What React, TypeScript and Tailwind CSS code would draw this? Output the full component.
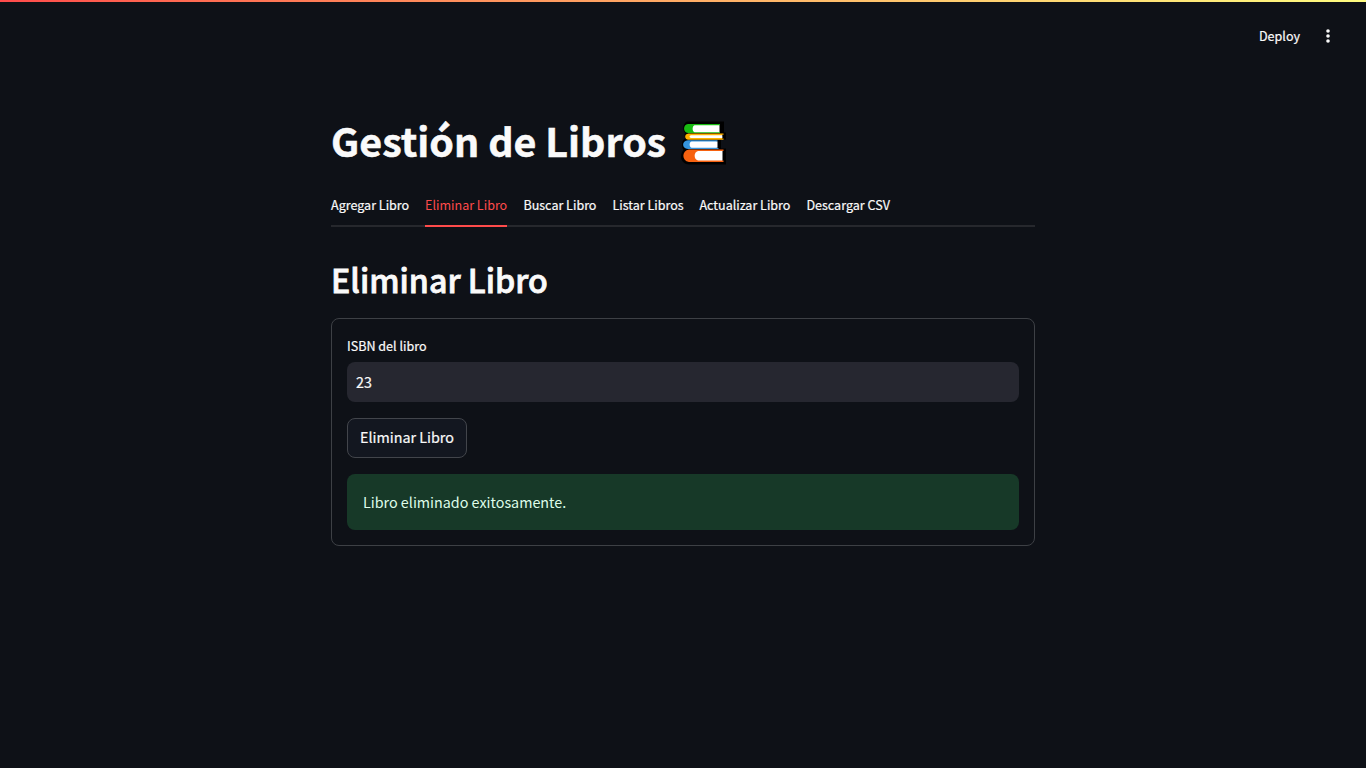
import type { ReactNode } from "react";

const tabs = ["Agregar Libro", "Eliminar Libro", "Buscar Libro", "Listar Libros", "Actualizar Libro", "Descargar CSV"];
const tabWidths = ["w-[78px]", "w-[82.4px]", "w-[73px]", "w-[71px]", "w-[91px]", "w-[84px]"];

function Books() {
  return (
    <svg viewBox="0 0 45 45" className="ml-[15px] h-[45px] w-[45px] shrink-0" aria-hidden="true">
      <path
        d="M6 1.500H43V12.500H45V19.500H40V28.500H45V44.500H8C4 44.500 0 41 0 37C0 33.500 1.500 31 2.500 30C0 26 0.500 20 4.500 18C3.500 16.500 3 15 4 13C1 9.500 2 3 6 1.500Z"
        fill="#000"
      />
      <path d="M7 4H39V5.200H38V12H39V13H7C1.800 12.500 1.800 4.500 7 4Z" fill="#18bb12" />
      <path d="M13.500 5.200H38.500V12.200H13.500C11 11.500 11 6 13.500 5.200Z" fill="#fff" />
      <path d="M7.500 13.500H42.500V14.700H41V18.500H42.500V19.800H7.500C3.100 19.300 3.100 14 7.500 13.500Z" fill="#ffb000" />
      <path d="M10 15.200H41.400V18H10C8 17.600 8 15.600 10 15.200Z" fill="#fff" />
      <path d="M7 20.200H36.500V21.400H35.500V28H37.500V29H7C0.500 28.500 0.500 20.700 7 20.200Z" fill="#3594dd" />
      <path d="M10.500 21.500H36.500V27.800H10.500C8 27 8 22 10.500 21.500Z" fill="#fff" />
      <path d="M8 29.500H42.500V31H41V40.500H42.500V42H8C0.500 41 0.500 30.500 8 29.500Z" fill="#f76210" />
      <path d="M17 31H41.500V40.500H17C12.500 39.500 12.500 32 17 31Z" fill="#fff" />
    </svg>
  );
}

function Line({ children, className }: { children: ReactNode; className: string }) {
  return <p className={`whitespace-nowrap ${className}`}>{children}</p>;
}

export default function App() {
  return (
    <div className="flex h-screen flex-col overflow-hidden bg-[#0e1117] font-['Noto_Sans_CJK_JP',sans-serif] text-[#fafafa] [-webkit-text-stroke:0.2px_currentColor]">
      <div className="h-[2px] shrink-0 bg-gradient-to-r from-[#ff4b4b] to-[#fffd80]" />
      <header className="flex h-[58px] shrink-0 items-center justify-end pt-[10px] pr-[26px]">
        <button className="h-6 text-[12.55px] leading-6">Deploy</button>
        <button className="ml-4 flex h-6 w-6 items-center justify-center" aria-label="Menú">
          <svg viewBox="0 0 4 14" className="h-[14px] w-1" fill="currentColor">
            <circle cx="2" cy="2" r="1.800" />
            <circle cx="2" cy="7" r="1.800" />
            <circle cx="2" cy="12" r="1.800" />
          </svg>
        </button>
      </header>
      <main className="mx-auto mt-[60px] w-[704px]">
        <h1 className="flex h-[45px] items-start text-[39.400px] leading-[39px] font-bold whitespace-nowrap [-webkit-text-stroke:0.5px_currentColor]">
          Gestión de Libros
          <Books />
        </h1>
        <nav className="mt-[21px] flex h-[41px] gap-4 shadow-[inset_0_-2px_0_#26282d]">
          {tabs.map((tab, i) => (
            <button
              key={tab}
              className={`${tabWidths[i]} flex h-[41px] text-left text-[12.55px] leading-[38px] whitespace-nowrap ${
                i === 1 ? "text-[#ff4b4b] shadow-[inset_0_-2px_0_#ff4b4b] [-webkit-text-stroke:0px]" : ""
              }`}
            >
              {tab}
            </button>
          ))}
        </nav>
        <h2 className="mt-[32px] h-[43px] text-[32.200px] leading-[41px] font-medium whitespace-nowrap [-webkit-text-stroke:0.8px_currentColor]">
          Eliminar Libro
        </h2>
        <form className="mt-4 flex h-[228px] flex-col rounded-lg border border-[#3d4045] px-[15px] pt-[15px]">
          <Line className="h-6 text-[12.55px] leading-6">ISBN del libro</Line>
          <div className="mt-1 h-10 rounded-lg bg-[#262730] px-[9px]">
            <Line className="text-[14.300px] leading-10">23</Line>
          </div>
          <button
            type="button"
            className="mt-4 flex h-10 w-[120px] justify-center rounded-lg border border-[#42454b] bg-[#131720] text-[14.330px] leading-[36px] whitespace-nowrap"
          >
            Eliminar Libro
          </button>
          <div className="mt-4 h-14 rounded-lg bg-[#173928] px-4 text-[#dffde9]">
            <Line className="text-[14.330px] leading-[56px] [-webkit-text-stroke:0px]">Libro eliminado exitosamente.</Line>
          </div>
        </form>
      </main>
    </div>
  );
}
